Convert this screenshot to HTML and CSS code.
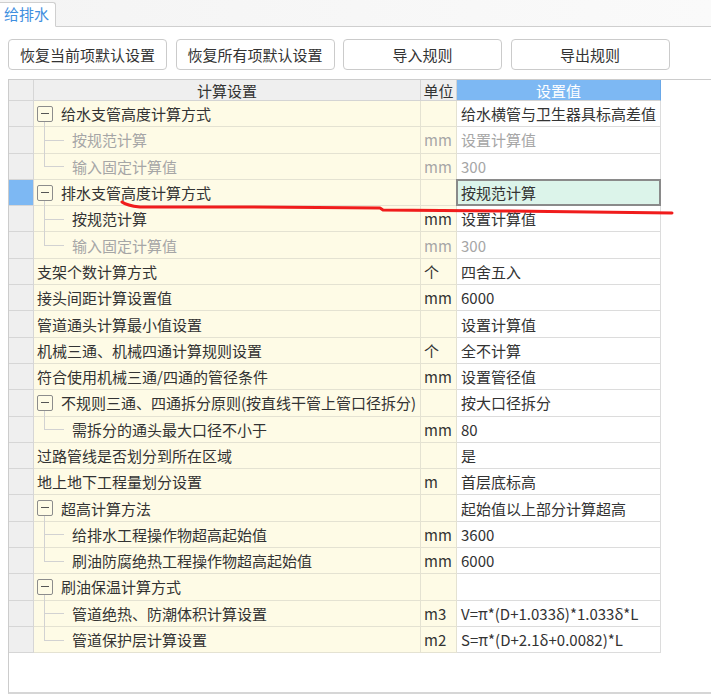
FILE: index.html
```html
<!DOCTYPE html>
<html lang="zh">
<head>
<meta charset="utf-8">
<link rel="stylesheet" href="styles.css">
</head>
<body>
<div class="tabbar">
  <div class="tab">给排水</div>
</div>
<div class="toolbar">
  <button class="btn">恢复当前项默认设置</button>
  <button class="btn">恢复所有项默认设置</button>
  <button class="btn">导入规则</button>
  <button class="btn">导出规则</button>
</div>
<div class="gridbox">
  <div class="sheet">
    <div class="hd rh"></div>
    <div class="hd">计算设置</div>
    <div class="hd">单位</div>
    <div class="hd hv">设置值</div>

    <div class="rh"></div><div class="c name parent"><span class="exp"></span>给水支管高度计算方式</div><div class="c unit"></div><div class="c val">给水横管与卫生器具标高差值</div>
    <div class="rh"></div><div class="c name child dis">按规范计算</div><div class="c unit dis">mm</div><div class="c val dis">设置计算值</div>
    <div class="rh"></div><div class="c name child last dis">输入固定计算值</div><div class="c unit dis">mm</div><div class="c val dis">300</div>

    <div class="rh sel"></div><div class="c name parent"><span class="exp"></span>排水支管高度计算方式</div><div class="c unit"></div><div class="c val cur">按规范计算</div>
    <div class="rh"></div><div class="c name child">按规范计算</div><div class="c unit">mm</div><div class="c val">设置计算值</div>
    <div class="rh"></div><div class="c name child last dis">输入固定计算值</div><div class="c unit dis">mm</div><div class="c val dis">300</div>

    <div class="rh"></div><div class="c name">支架个数计算方式</div><div class="c unit">个</div><div class="c val">四舍五入</div>
    <div class="rh"></div><div class="c name">接头间距计算设置值</div><div class="c unit">mm</div><div class="c val">6000</div>
    <div class="rh"></div><div class="c name">管道通头计算最小值设置</div><div class="c unit"></div><div class="c val">设置计算值</div>
    <div class="rh"></div><div class="c name">机械三通、机械四通计算规则设置</div><div class="c unit">个</div><div class="c val">全不计算</div>
    <div class="rh"></div><div class="c name">符合使用机械三通/四通的管径条件</div><div class="c unit">mm</div><div class="c val">设置管径值</div>

    <div class="rh"></div><div class="c name parent"><span class="exp"></span>不规则三通、四通拆分原则(按直线干管上管口径拆分)</div><div class="c unit"></div><div class="c val">按大口径拆分</div>
    <div class="rh"></div><div class="c name child last">需拆分的通头最大口径不小于</div><div class="c unit">mm</div><div class="c val">80</div>

    <div class="rh"></div><div class="c name">过路管线是否划分到所在区域</div><div class="c unit"></div><div class="c val">是</div>
    <div class="rh"></div><div class="c name">地上地下工程量划分设置</div><div class="c unit">m</div><div class="c val">首层底标高</div>

    <div class="rh"></div><div class="c name parent"><span class="exp"></span>超高计算方法</div><div class="c unit"></div><div class="c val">起始值以上部分计算超高</div>
    <div class="rh"></div><div class="c name child">给排水工程操作物超高起始值</div><div class="c unit">mm</div><div class="c val">3600</div>
    <div class="rh"></div><div class="c name child last">刷油防腐绝热工程操作物超高起始值</div><div class="c unit">mm</div><div class="c val">6000</div>

    <div class="rh"></div><div class="c name parent"><span class="exp"></span>刷油保温计算方式</div><div class="c unit"></div><div class="c val"></div>
    <div class="rh"></div><div class="c name child">管道绝热、防潮体积计算设置</div><div class="c unit">m3</div><div class="c val">V=π*(D+1.033δ)*1.033δ*L</div>
    <div class="rh"></div><div class="c name child last">管道保护层计算设置</div><div class="c unit">m2</div><div class="c val">S=π*(D+2.1δ+0.0082)*L</div>
  </div>
</div>
<svg class="mark" width="711" height="699" viewBox="0 0 711 699">
  <path d="M122 202 C126 205 131 206 140 207 L240 207 L380 208 L383 210 L500 211 L672 213" fill="none" stroke="#f01c1c" stroke-width="3" stroke-linecap="round" stroke-linejoin="round"/>
</svg>
</body>
</html>
```
FILE: styles.css
```css
html, body {
  margin: 0;
  padding: 0;
  overflow: hidden;
  background: #ffffff;
}
body {
  font-family: "Noto Sans CJK SC", "Noto Sans", sans-serif;
  font-size: 15px;
  color: #333333;
  position: relative;
  width: 711px;
  height: 699px;
}
.tabbar {
  height: 26px;
  background: linear-gradient(to right, #f4f4f4, #fafafa);
  border-bottom: 1px solid #cfcfcf;
  display: flex;
  align-items: flex-end;
}
.tab {
  height: 25px;
  width: 56px;
  margin-bottom: -1px;
  box-sizing: border-box;
  background: #ffffff;
  border: 1px solid #cfcfcf;
  border-left: none;
  border-bottom: 1px solid #ffffff;
  border-top-right-radius: 3px;
  color: #3f8fe0;
  line-height: 22px;
  padding-left: 4px;
}
.toolbar {
  display: flex;
  gap: 8.5px;
  padding: 12px 0 0 8px;
  height: 31px;
}
.btn {
  width: 159px;
  height: 31px;
  box-sizing: border-box;
  border: 1px solid #cbcbcb;
  border-radius: 4px;
  background: #ffffff;
  font-family: inherit;
  font-size: 15px;
  color: #333333;
  padding: 0;
  line-height: 1;
}
.gridbox {
  margin: 9px 0 0 8px;
  width: 712px;
  height: 615px;
  box-sizing: border-box;
  border: 1px solid #cccccc;
  border-bottom: 2px solid #d6d6d6;
}
.sheet {
  display: grid;
  grid-template-columns: 25px 387px 36px 204px;
  grid-template-rows: 21px repeat(21, 26.3px);
}
.sheet > div {
  box-sizing: border-box;
  border-right: 1px solid #dcdcdc;
  border-bottom: 1px solid #dcdcdc;
  display: flex;
  align-items: center;
  white-space: nowrap;
  line-height: 1;
}
.hd {
  background: #efefef;
  justify-content: center;
  border-color: #d4d4d4 !important;
}
.hd.hv {
  background: #7db8f3;
  color: #ffffff;
  border-right-color: #6aa8e8 !important;
}
.rh {
  background: #efefef;
  border-color: #d6d6d6 !important;
}
.rh.sel {
  background: #7db8f3;
}
.c.name, .c.unit {
  background: #fefbe6;
  border-color: #e4e2d2;
}
.c.name {
  padding-left: 3px;
  position: relative;
}
.c.unit {
  padding-left: 3px;
}
.c.val {
  padding-left: 4px;
  background: #ffffff;
}
.c.val.cur {
  background: #dcf4ea;
  border: 2px solid #8a8a8a;
  margin: -1px 0 0 -1px;
  padding-left: 3px;
}
.dis {
  color: #a6a6a6;
}
.exp {
  width: 16px;
  height: 16px;
  box-sizing: border-box;
  border: 1px solid #8c8c8c;
  border-radius: 2px;
  margin-right: 8px;
  position: relative;
  flex: none;
  background: #fefbe6;
}
.exp::after {
  content: "";
  position: absolute;
  left: 3px;
  right: 3px;
  top: 6px;
  height: 1px;
  background: #555555;
}
.parent::before {
  content: "";
  position: absolute;
  left: 10px;
  top: 21px;
  bottom: -1px;
  width: 1px;
  background: #d2d2d2;
}
.child {
  padding-left: 38px !important;
}
.child::before {
  content: "";
  position: absolute;
  left: 10px;
  top: -1px;
  bottom: -1px;
  width: 1px;
  background: #d2d2d2;
}
.child.last::before {
  bottom: 50%;
}
.child::after {
  content: "";
  position: absolute;
  left: 10px;
  top: 50%;
  width: 20px;
  height: 1px;
  background: #d2d2d2;
}
.mark {
  position: absolute;
  left: 0;
  top: 0;
  pointer-events: none;
}
```
